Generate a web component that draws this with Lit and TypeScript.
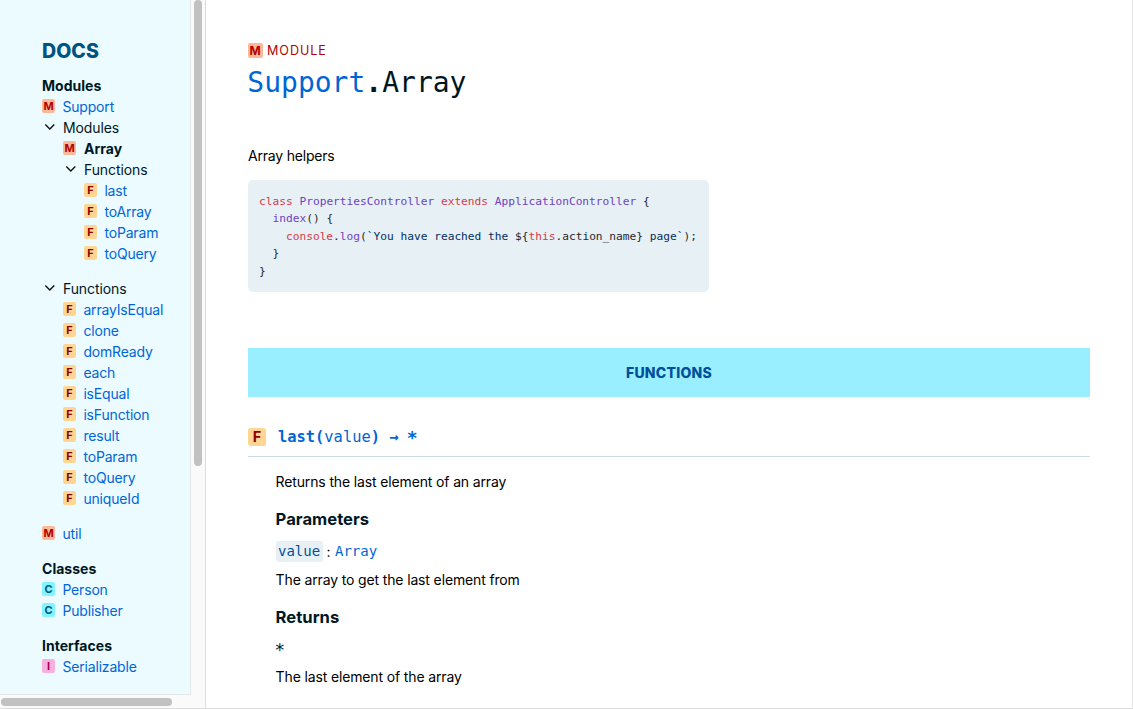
import { LitElement, html, css, nothing } from "lit";
import { customElement, property } from "lit/decorators.js";

type Kind = "M" | "F" | "C" | "I";

interface Node {
  label: string;
  kind?: Kind;
  current?: boolean;
  group?: boolean;
  children?: Node[];
}

const fn = (label: string): Node => ({ label, kind: "F" });

const sections: { title: string; nodes: Node[] }[] = [
  {
    title: "Modules",
    nodes: [
      {
        label: "Support",
        kind: "M",
        children: [
          {
            label: "Modules",
            group: true,
            children: [
              {
                label: "Array",
                kind: "M",
                current: true,
                children: [
                  {
                    label: "Functions",
                    group: true,
                    children: ["last", "toArray", "toParam", "toQuery"].map(fn),
                  },
                ],
              },
            ],
          },
          {
            label: "Functions",
            group: true,
            children: [
              "arrayIsEqual", "clone", "domReady", "each", "isEqual",
              "isFunction", "result", "toParam", "toQuery", "uniqueId",
            ].map(fn),
          },
        ],
      },
      { label: "util", kind: "M" },
    ],
  },
  { title: "Classes", nodes: [{ label: "Person", kind: "C" }, { label: "Publisher", kind: "C" }] },
  { title: "Interfaces", nodes: [{ label: "Serializable", kind: "I" }] },
];

/* Each code line is a list of [token class, text] pairs. */
const codeLines: [string, string][][] = [
  [["k", "class"], ["", " "], ["f", "PropertiesController"], ["", " "], ["k", "extends"], ["", " "], ["f", "ApplicationController"], ["", " {"]],
  [["", "  "], ["f", "index"], ["", "() {"]],
  [
    ["", "    "], ["k", "console"], ["", "."], ["f", "log"], ["", "("], ["s", "`You have reached the "],
    ["", "${"], ["k", "this"], ["", ".action_name}"], ["s", " page`"], ["", ");"],
  ],
  [["", "  }"]],
  [["", "}"]],
];

@customElement("kind-badge")
class KindBadge extends LitElement {
  @property() kind: Kind = "M";
  @property({ reflect: true }) size = "small";

  static styles = css`
    :host { display: block; flex: none; }
    .badge {
      display: flex; align-items: center; justify-content: center;
      width: 13px; height: 14px; border-radius: 2px;
      font: 700 11px/14px Inter, sans-serif;
    }
    :host([size="medium"]) .badge { width: 15px; height: 15px; font-size: 12px; line-height: 15px; }
    :host([size="large"]) .badge { width: 18px; height: 18px; border-radius: 3px; font-size: 14.5px; line-height: 18px; }
    .M { background: #fcb99a; color: #b30000; }
    .F { background: #ffd591; color: #8c0000; }
    .C { background: #85f3ff; color: #005b78; }
    .I { background: #f8b0e0; color: #a80050; }
  `;

  render() {
    return html`<div class="badge ${this.kind}">${this.kind}</div>`;
  }
}

@customElement("docs-sidebar")
class DocsSidebar extends LitElement {
  static styles = css`
    :host {
      display: grid; box-sizing: border-box; height: 708px; width: 206px;
      grid-template: 695px 13px / 191px 14px;
      border-right: 1px solid #dadde2; background: #fafafa;
      font: 14px/21px Inter, sans-serif; color: #00171f;
    }
    nav {
      box-sizing: border-box; padding: 39px 0 0 42px; background: #ebfbff;
      border-right: 1px solid #e4e8ea; border-bottom: 1px solid #e4e8ea;
      white-space: nowrap; overflow: hidden;
    }
    .brand { margin: 0 0 12px; font-size: 19.6px; line-height: 24px; font-weight: 800; color: #005380; letter-spacing: 0; }
    .title { margin: 0; font-size: 14px; line-height: 21px; font-weight: 700; letter-spacing: 0.02px; }
    .section { margin-bottom: 14px; }
    .row { display: flex; height: 21px; }
    .row kind-badge { margin: 3px 7.4px 0 0; }
    .link { color: #0066d6; letter-spacing: -0.17px; }
    .current { font-weight: 700; margin-left: 0.6px; }
    .label { letter-spacing: -0.1px; }
    .chevron { width: 15px; height: 21px; margin-right: 6px; flex: none; }
    .chevron path { fill: none; stroke: #111; stroke-width: 1.4; }
    .group { margin-bottom: 14px; }
    .nested { padding-left: 21px; }
    .nested .group { margin-bottom: 0; }
  `;

  node(n: Node): unknown {
    if (n.group) {
      return html`<div class="group">
        <div class="row">
          <svg class="chevron" viewBox="0 0 15 21"><path d="M3.3 7.6 L7.8 12.1 L12.3 7.6" /></svg>
          <span class="label">${n.label}</span>
        </div>
        <div class="nested">${n.children!.map((c) => this.node(c))}</div>
      </div>`;
    }
    return html`<div class="row">
        <kind-badge .kind=${n.kind!}></kind-badge>
        <span class=${n.current ? "current" : "link"}>${n.label}</span>
      </div>
      ${n.children ? n.children.map((c) => this.node(c)) : nothing}`;
  }

  render() {
    return html`
      <nav>
        <h2 class="brand">DOCS</h2>
        ${sections.map(
          (s) => html`<div class="section">
            <h3 class="title">${s.title}</h3>
            ${s.nodes.map((n) => this.node(n))}
          </div>`,
        )}
      </nav>
      <scroll-track vertical></scroll-track>
      <scroll-track></scroll-track>
    `;
  }
}

@customElement("scroll-track")
class ScrollTrack extends LitElement {
  static styles = css`
    :host { display: block; padding: 3px 0 0 1px; }
    :host([vertical]) { padding: 0 0 0 3px; }
    .thumb { width: 171px; height: 8px; border-radius: 4px; background: #c1c1c1; }
    :host([vertical]) .thumb { width: 8px; height: 466px; }
  `;
  render() {
    return html`<div class="thumb"></div>`;
  }
}

@customElement("app-root")
class AppRoot extends LitElement {
  static styles = css`
    :host {
      display: grid; grid-template-columns: 206px 1fr; box-sizing: border-box;
      width: 1133px; height: 709px; overflow: hidden; background: #fff;
      border-right: 1px solid #e4e4e4; border-bottom: 1px solid #dcdcdc;
      font: 14px/21px Inter, sans-serif; color: #000;
    }
    main { padding: 40px 42px 0; }
    h1, h2, h3, h4, p { margin: 0; }
    .mono, .code, h1, code { font-family: "DejaVu Sans Mono", monospace; }
    .eyebrow { display: flex; align-items: center; gap: 4px; height: 21px; color: #b30000; font-size: 12.6px; letter-spacing: 0.95px; }
    h1 { height: 42px; margin: 1px 0 0 -0.7px; font-size: 28px; line-height: 42px; font-weight: 400; color: #00171f; }
    .blue { color: #0066d6; }
    .dot { font-weight: 700; }
    .body { letter-spacing: -0.14px; }
    .lead { margin: 41px 0 14px; letter-spacing: -0.2px; }
    .code {
      box-sizing: border-box; width: 461px; height: 112px; padding: 12.6px 11px; border-radius: 5px;
      background: #e7f0f5; color: #24292e; font-size: 11.2px; line-height: 17.6px;
    }
    .line { height: 17.6px; white-space: pre; }
    .k { color: #d73a49; }
    .f { color: #6f42c1; }
    .s { color: #032f62; }
    .banner {
      height: 49px; margin: 56px 0 26px; background: #99efff; color: #005099; text-align: center;
      font-size: 14px; line-height: 49px; font-weight: 800; letter-spacing: 0.25px;
    }
    .signature {
      display: flex; align-items: center; gap: 12px; height: 34px; padding-bottom: 6px; box-sizing: border-box;
      border-bottom: 1px solid #c9dce5; color: #0066d6; font-size: 15.4px; line-height: 24px; font-weight: 700;
    }
    .signature .mono { display: flex; height: 24px; white-space: pre; }
    .thin { font-weight: 400; }
    .bigstar { font-size: 18px; line-height: 26px; margin-left: -1px; }
    .details { padding: 14px 0 0 27.6px; }
    h4 { color: #00171f; font-size: 16.6px; line-height: 24px; font-weight: 700; letter-spacing: 0.03px; }
    .params { margin: 15px 0 10px; }
    .returns { margin: 15px 0 10px; }
    .param { display: flex; align-items: center; height: 21px; margin: 10px 0 7px; }
    .chip { padding: 0 2.4px; border-radius: 3px; background: #e7f0f5; color: #005099; margin-right: 4px; }
    .sep { margin-right: 4.4px; }
    .star { color: #00171f; display: block; height: 21px; margin: 9px 0 6px -1.2px; font-size: 17.5px; line-height: 22px; }
  `;

  render() {
    return html`
      <docs-sidebar></docs-sidebar>
      <main>
        <div class="eyebrow"><kind-badge kind="M" size="medium"></kind-badge><span>MODULE</span></div>
        <h1><span class="blue">Support</span><span class="dot">.</span>Array</h1>
        <p class="lead body">Array helpers</p>
        <div class="code">
          ${codeLines.map(
            (line) => html`<div class="line">${line.map(([c, t]) => html`<span class=${c}>${t}</span>`)}</div>`,
          )}
        </div>
        <h2 class="banner">FUNCTIONS</h2>
        <div class="signature">
          <kind-badge kind="F" size="large"></kind-badge>
          <span class="mono"><span>last(</span><span class="thin">value</span><span>) → </span><span class="bigstar">*</span></span>
        </div>
        <div class="details">
          <p class="body">Returns the last element of an array</p>
          <h4 class="params">Parameters</h4>
          <div class="param"><code class="chip">value</code><span class="sep">:</span><code class="blue">Array</code></div>
          <p class="body">The array to get the last element from</p>
          <h4 class="returns">Returns</h4>
          <code class="star">*</code>
          <p class="body">The last element of the array</p>
        </div>
      </main>
    `;
  }
}
